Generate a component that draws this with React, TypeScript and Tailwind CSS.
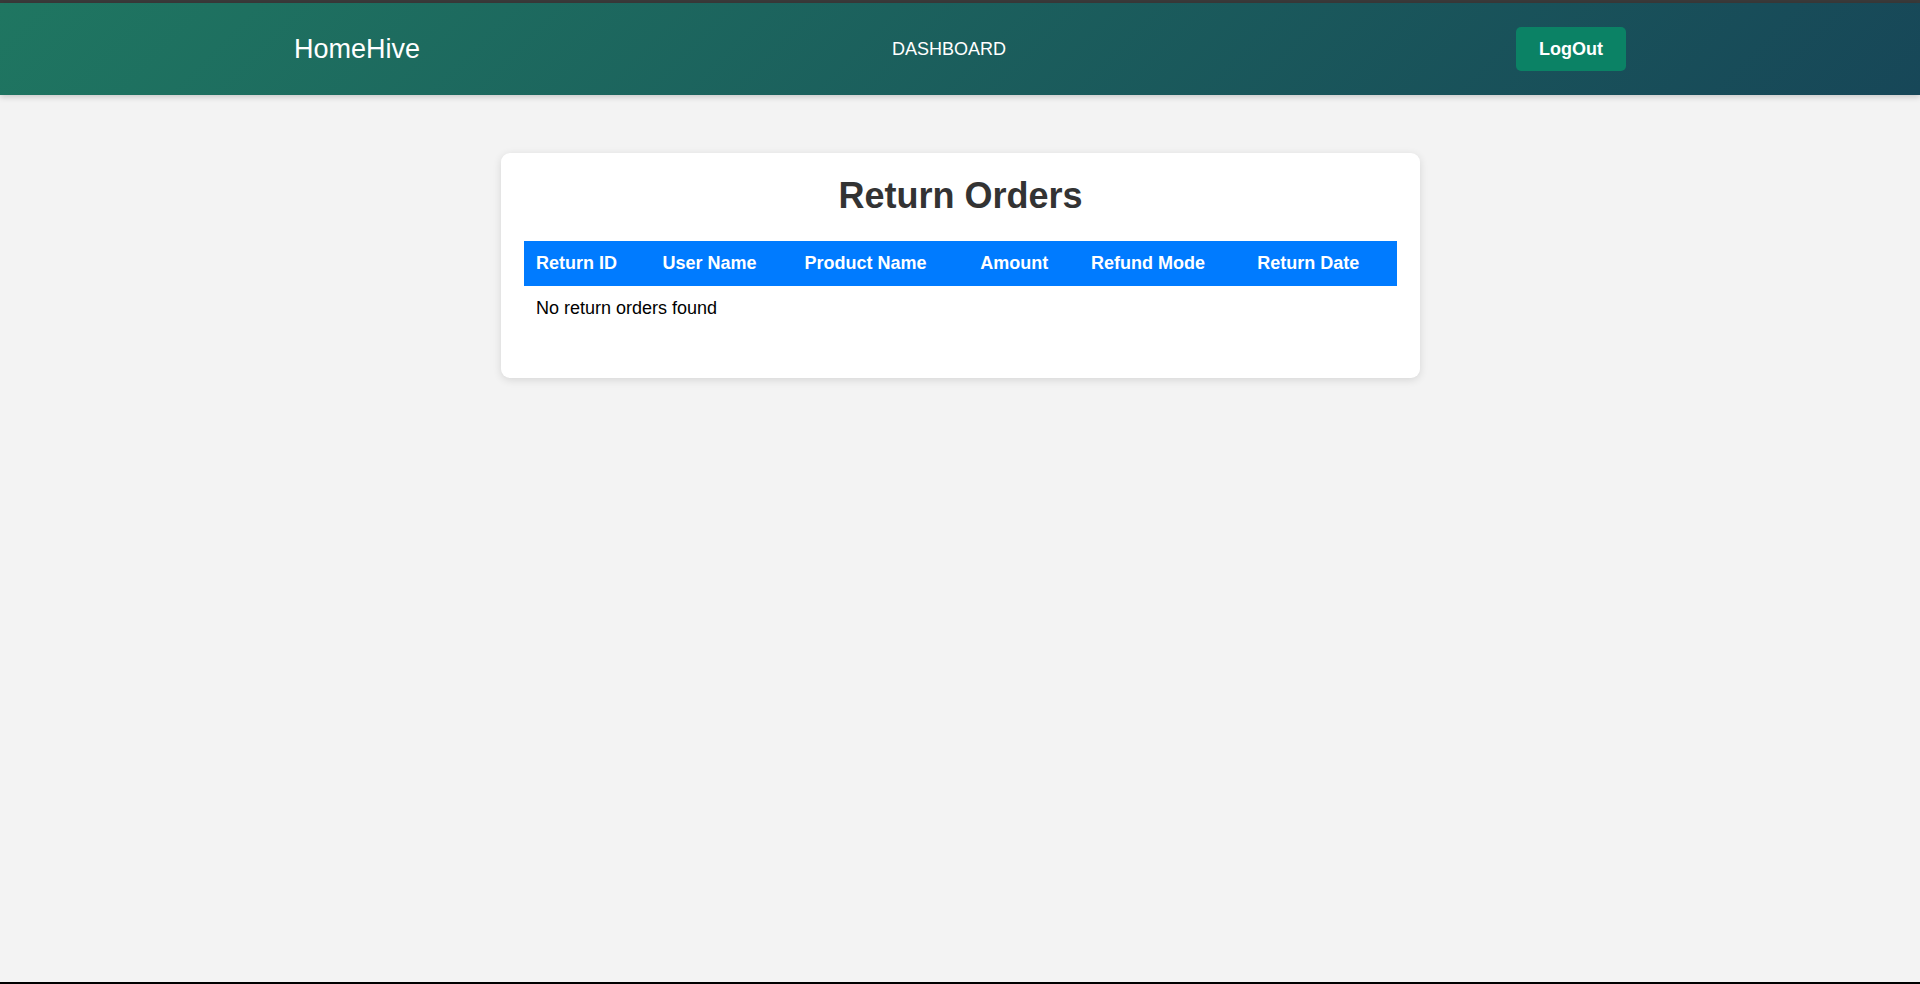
const COLUMNS = ['Return ID', 'User Name', 'Product Name', 'Amount', 'Refund Mode', 'Return Date'];

function Navbar() {
  return (
    <header className="h-[92px] bg-[linear-gradient(135deg,#1f7661,#174758)] shadow-[0_2px_6px_rgba(0,0,0,0.18)]">
      <div className="mx-auto flex h-full w-[1332px] items-center">
        <span className="text-[27px] text-white">HomeHive</span>
        <a className="ml-[472px] text-[18px] uppercase text-white">Dashboard</a>
        <button className="ml-auto h-[44px] w-[110px] rounded-[5px] bg-[#0b8265] text-[18px] font-bold text-white">
          LogOut
        </button>
      </div>
    </header>
  );
}

function ReturnOrders() {
  return (
    <div className="ml-[501px] mt-[58px] w-[919px] rounded-[9px] bg-white px-[23px] pb-[23px] pt-[22px] shadow-[0_2px_8px_rgba(0,0,0,0.12)]">
      <h1 className="mb-[24px] text-center text-[36px] font-bold leading-[normal] text-[#333]">Return Orders</h1>
      <table className="mb-[24px] w-full border-collapse text-[18px] leading-[normal]">
        <thead className="bg-[#007bff] text-white">
          <tr>
            {COLUMNS.map((c) => (
              <th key={c} className="p-3 text-left font-bold">
                {c}
              </th>
            ))}
          </tr>
        </thead>
        <tbody>
          <tr>
            <td colSpan={6} className="p-3 text-black">
              No return orders found
            </td>
          </tr>
        </tbody>
      </table>
    </div>
  );
}

export default function App() {
  return (
    <div className="box-border h-[984px] border-b-2 border-t-[3px] border-b-black border-t-[#3a3a3a] bg-[#f3f3f3] font-['Liberation_Sans',Arial,sans-serif]">
      <Navbar />
      <ReturnOrders />
    </div>
  );
}
